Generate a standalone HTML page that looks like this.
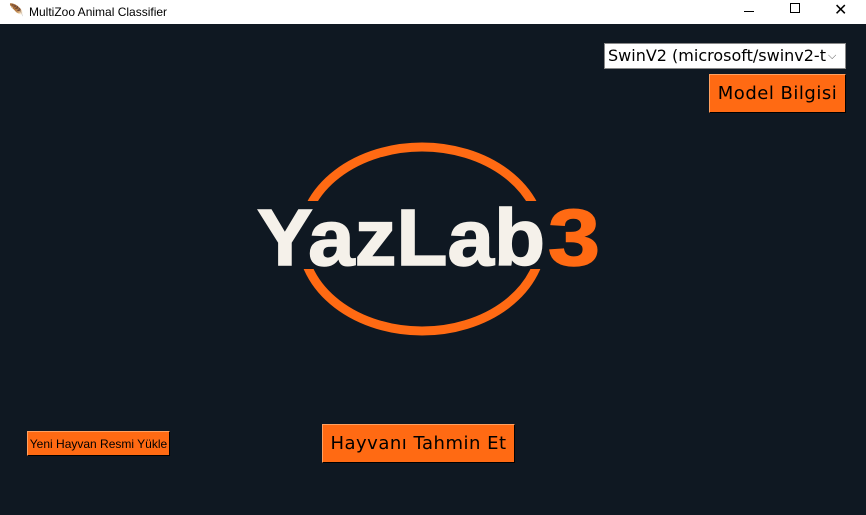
<!DOCTYPE html>
<html><head><style>
body{margin:0;width:866px;height:515px;overflow:hidden;background:#0f1822;font-family:"Liberation Sans",sans-serif;position:relative}
.tb{position:absolute;left:0;top:0;width:866px;height:24px;background:#fff;font-size:12px;color:#000}
.btn{position:absolute;background:#ff6a13;border:1px solid #ffa060;border-right-color:#000;border-bottom-color:#000;box-sizing:border-box;color:#000;display:flex;align-items:center;justify-content:center;font-family:"DejaVu Sans",sans-serif}
</style></head><body>
<div class="tb">
<span style="position:absolute;left:9px;top:3px;font-size:12px">🪶</span>
<span style="position:absolute;left:29px;top:5px">MultiZoo Animal Classifier</span>
<span style="position:absolute;left:744px;top:11px;width:10px;height:1px;background:#000"></span>
<span style="position:absolute;left:790px;top:3px;width:8px;height:8px;border:1px solid #000"></span>
<span style="position:absolute;left:834px;top:0px;font-size:16px">✕</span>
</div>
<div style="position:absolute;left:604px;top:43px;width:242px;height:26px;background:#fff;border:1px solid #888;box-sizing:border-box;font-family:'DejaVu Sans',sans-serif;font-size:16px;font-weight:500;line-height:24px;padding-left:3px;overflow:hidden;white-space:nowrap">SwinV2 (microsoft/swinv2-t<span style="position:absolute;right:3px;top:0;background:#fff;width:14px;font-size:11px;color:#555">⌵</span></div>
<div class="btn" style="left:709px;top:74px;width:137px;height:39px;font-size:18px;letter-spacing:0.5px">Model Bilgisi</div>
<svg style="position:absolute;left:0;top:0" width="866" height="515">
<ellipse cx="422" cy="239" rx="120" ry="92" fill="none" stroke="#ff6a13" stroke-width="9"/>
<rect x="285" y="201" width="280" height="68" fill="#0f1822"/>
<text x="257" y="265" font-family="Liberation Sans" font-weight="bold" font-size="80" fill="#f5f1ea" stroke="#f5f1ea" stroke-width="1.5" textLength="288" lengthAdjust="spacingAndGlyphs">YazLab</text>
<text x="548" y="265" font-family="Liberation Sans" font-weight="bold" font-size="80" fill="#ff6a13" stroke="#ff6a13" stroke-width="1.5" textLength="52" lengthAdjust="spacingAndGlyphs">3</text>
</svg>
<div class="btn" style="left:27px;top:431px;width:143px;height:25px;font-size:12px;font-family:'Liberation Sans',sans-serif">Yeni Hayvan Resmi Yükle</div>
<div class="btn" style="left:322px;top:424px;width:193px;height:39px;font-size:18px;letter-spacing:0.5px">Hayvanı Tahmin Et</div>
</body></html>
